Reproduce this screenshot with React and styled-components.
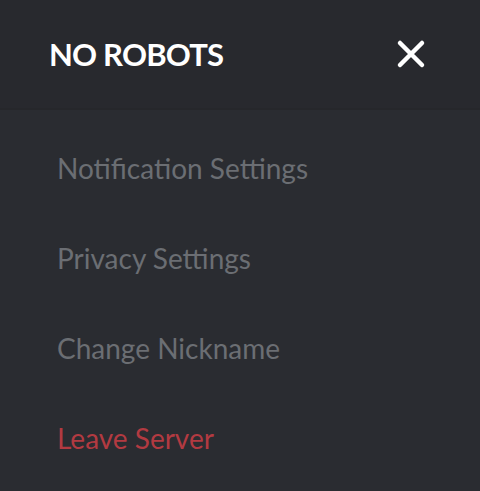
import React from 'react';
import styled, { createGlobalStyle } from 'styled-components';

const GlobalStyle = createGlobalStyle`
    html, body {
        margin: 0;
        padding: 0;
        background-color: #2a2c31;
    }
`

const Panel = styled.div`
    display: flex;
    flex-direction: column;
    width: 480px;
    height: 491px;
    background-color: #2a2c31;
    font-family: Lato, "Open Sans", sans-serif;
    overflow: hidden;
`
const Header = styled.div`
    display: flex;
    flex-shrink: 0;
    align-items: center;
    justify-content: space-between;
    height: 110px;
    padding: 0 54px 0 49px;
    background-color: #28292e;
    border-bottom: 2px solid #26272b;
    box-sizing: border-box;
`
const Title = styled.span`
    font-size: 31px;
    font-weight: 700;
    letter-spacing: -0.8px;
    color: #ffffff;
`
const CloseButton = styled.button`
    display: flex;
    align-items: center;
    justify-content: center;
    padding: 0;
    border: none;
    background: none;
    cursor: pointer;
`
const Menu = styled.div`
    display: flex;
    flex-direction: column;
    padding: 35px 0 0 57px;
`
const MenuItem = styled.div`
    flex-shrink: 0;
    height: 90px;
    font-size: 28px;
    line-height: 46px;
    color: ${(props) => (props.danger ? '#b23a41' : '#6b6e73')};
    cursor: pointer;
`

export default function App() {
    return (
        <Panel>
            <GlobalStyle />
            <Header>
                <Title>NO ROBOTS</Title>
                <CloseButton>
                    <svg width="30" height="30" viewBox="0 0 30 30">
                        <path d="M4 4 L26 26 M26 4 L4 26" stroke="#ffffff" strokeWidth="4.5" strokeLinecap="round" />
                    </svg>
                </CloseButton>
            </Header>
            <Menu>
                <MenuItem>Notification Settings</MenuItem>
                <MenuItem>Privacy Settings</MenuItem>
                <MenuItem>Change Nickname</MenuItem>
                <MenuItem danger>Leave Server</MenuItem>
            </Menu>
        </Panel>
    )
}
